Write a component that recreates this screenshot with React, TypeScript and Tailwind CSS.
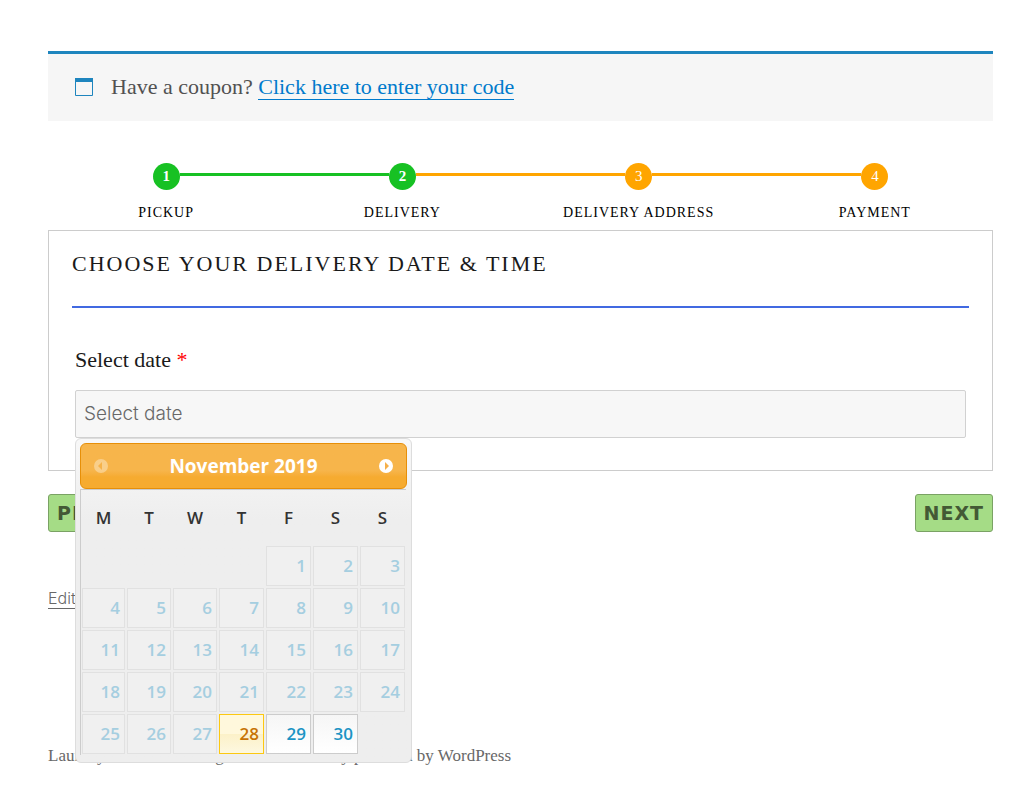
import React, { useState } from "react"
import clsx from "clsx"

const STEPS = [
  { label: "Pickup", done: true },
  { label: "Delivery", done: true },
  { label: "Delivery address", done: false },
  { label: "Payment", done: false },
]

const WEEKDAYS = [
  { short: "M", full: "Monday", col: "w-[45px]" },
  { short: "T", full: "Tuesday", col: "w-[46px]" },
  { short: "W", full: "Wednesday", col: "w-[46px]" },
  { short: "T", full: "Thursday", col: "w-[47px]" },
  { short: "F", full: "Friday", col: "w-[47px]" },
  { short: "S", full: "Saturday", col: "w-[47px]" },
  { short: "S", full: "Sunday", col: "w-[47px]" },
]

const TODAY = 28

// November 2019 starts on a Friday
const WEEKS = Array.from({ length: 5 }, (_, w) =>
  Array.from({ length: 7 }, (_, d) => {
    const day = w * 7 + d - 3
    return day >= 1 && day <= 30 ? day : null
  })
)

function Steps() {
  return (
    <ol className="mt-[42px] grid grid-cols-4">
      {STEPS.map((step, i) => (
        <li key={step.label} className="flex flex-col items-center">
          <div className="flex w-full items-center">
            <span
              className={clsx(
                "mb-1 h-[3px] flex-1",
                i === 0 ? "bg-transparent" : i === 1 ? "bg-[#17c123]" : "bg-[#ffa500]"
              )}
            />
            <span
              className={clsx(
                "flex size-[27px] items-center justify-center rounded-full text-[15px] leading-none text-white",
                step.done ? "bg-[#17c123] font-bold" : "bg-[#ffa500]"
              )}
            >
              {i + 1}
            </span>
            <span
              className={clsx(
                "mb-1 h-[3px] flex-1",
                i === 3 ? "bg-transparent" : i === 0 ? "bg-[#17c123]" : "bg-[#ffa500]"
              )}
            />
          </div>
          <span className="mt-[13px] text-sm leading-5 tracking-[1px] whitespace-nowrap text-black uppercase">{step.label}</span>
        </li>
      ))}
    </ol>
  )
}

function ArrowIcon({ flip }: { flip?: boolean }) {
  return (
    <svg viewBox="0 0 14 14" className={clsx("size-3.5", flip && "rotate-180")} aria-hidden="true">
      <circle cx="7" cy="7" r="7" fill="#fff" />
      <path d="M6 3v8l4-4z" fill="#f6b04a" />
    </svg>
  )
}

function Calendar() {
  const [selected, setSelected] = useState<number | null>(null)

  return (
    <div className="absolute top-full left-0 z-10 h-[325px] w-[337px] rounded-md border border-[#dddddd] bg-linear-to-b from-[#f8f8f8] to-[#eeeeee] to-25% p-1 font-['Open_Sans',sans-serif]">
      <div className="flex h-[46px] items-center justify-between rounded-md border border-[#e78f08] bg-linear-to-b from-[#f7b54b] from-60% to-[#f6ab30] to-75% px-[13px]">
        <button type="button" disabled aria-label="Previous month" className="opacity-35">
          <ArrowIcon flip />
        </button>
        <span className="text-[19px] leading-7 font-bold text-white">November 2019</span>
        <button type="button" aria-label="Next month">
          <ArrowIcon />
        </button>
      </div>
      <table className="w-[326px] table-fixed border-separate border-spacing-0 border-t border-l border-[#cccccc]">
        <thead>
          <tr>
            {WEEKDAYS.map((d) => (
              <th key={d.full} scope="col" abbr={d.full} className={clsx("h-[55px] text-[17px] font-semibold text-[#333333]", d.col)}>
                {d.short}
              </th>
            ))}
          </tr>
        </thead>
        <tbody>
          {WEEKS.map((week, w) => (
            <tr key={w}>
              {week.map((day, d) => (
                <td key={d} className="h-[42px] p-px">
                  {day && (
                    <button
                      type="button"
                      disabled={day < TODAY}
                      onClick={() => setSelected(day)}
                      aria-pressed={selected === day}
                      className={clsx(
                        "block h-10 w-full border pr-1 pb-0.5 text-right text-[17px] leading-none font-semibold",
                        day < TODAY && "border-[#e1e1e1] bg-[#f0f0f0] text-[#a5cee0]",
                        day === TODAY && "border-[#fcc811] bg-linear-to-b from-[#fff8dc] from-50% via-[#fcf1c8] via-50% to-[#fdf8e0] text-[#c77405]",
                        day > TODAY && "border-[#cccccc] bg-linear-to-b from-[#f6f6f6] to-white text-[#1c94c4]"
                      )}
                    >
                      {day}
                    </button>
                  )}
                </td>
              ))}
            </tr>
          ))}
        </tbody>
      </table>
    </div>
  )
}

function NavButton({ children }: { children: React.ReactNode }) {
  return (
    <button
      type="button"
      className="h-[38px] rounded-[3px] border border-[#7aa264] bg-[#a5dc86] px-2 font-['DejaVu_Sans',sans-serif] text-[19px] leading-none font-bold tracking-[1px] text-[#435935]"
    >
      {children}
    </button>
  )
}

export default function App() {
  return (
    <main className="bg-white pt-[51px] pr-[42px] pb-4 pl-12 font-['Liberation_Serif',serif] text-[#1a1a1a]">
      <div className="flex h-[70px] items-center gap-[18px] border-t-[3px] border-[#1e85be] bg-[#f6f6f6] px-[27px] pb-0.5 text-[22px] leading-7 text-[#515151]">
        <svg viewBox="0 0 18 18" className="size-[18px]" aria-hidden="true">
          <path d="M.5.5h17v17H.5z" fill="none" stroke="#1e85be" />
          <path d="M0 0h18v4H0z" fill="#1e85be" />
        </svg>
        <p>
          Have a coupon?{" "}
          <a href="#coupon" className="border-b border-[#007acc] text-[#007acc]">
            Click here to enter your code
          </a>
        </p>
      </div>

      <Steps />

      <section className="mt-[7px] border border-[#cccccc] px-[23px] pt-4 pb-8">
        <h1 className="border-b-2 border-[#4169e1] pb-[25px] text-[22px] leading-[34px] tracking-[2px] uppercase">
          Choose your delivery date &amp; time
        </h1>
        <div className="relative mx-[3px] mt-[38px]">
          <label htmlFor="delivery-date" className="block text-[22px] leading-7">
            Select date <span className="text-[#ff0000]">*</span>
          </label>
          <input
            id="delivery-date"
            type="text"
            readOnly
            placeholder="Select date"
            className="mt-4 block h-12 w-full rounded-[2px] border border-[#d1d1d1] bg-[#f7f7f7] px-2 pb-0.5 font-[Inter,sans-serif] text-[19px] font-light placeholder:text-[#686868]"
          />
          <Calendar />
        </div>
      </section>

      <div className="mt-[23px] flex justify-between">
        <NavButton>PREV</NavButton>
        <NavButton>NEXT</NavButton>
      </div>

      <a href="#edit" className="mt-[57px] inline-block border-b border-[#686868] font-[Inter,sans-serif] text-base leading-[19px] font-light text-[#686868]">
        Edit
      </a>

      <footer className="mt-[133px] flex text-[17px] leading-6 text-[#686868]">
        <span className="w-[248px]">Laundry Service Booking Demo</span>
        <span>Proudly powered by WordPress</span>
      </footer>
    </main>
  )
}
